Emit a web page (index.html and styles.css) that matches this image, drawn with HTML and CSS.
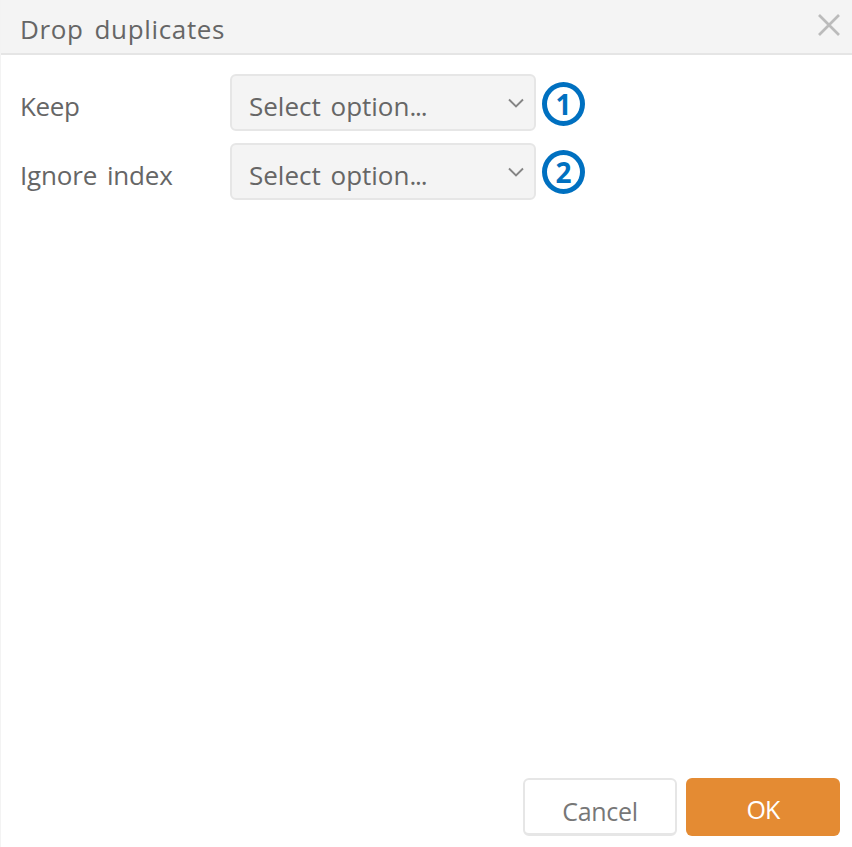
FILE: index.html
```html
<!DOCTYPE html>
<html lang="en">
<head>
<meta charset="utf-8">
<title>Drop duplicates</title>
<link rel="stylesheet" href="styles.css">
</head>
<body>
<div class="dialog">
  <header class="header">
    <h1 class="title">Drop duplicates</h1>
    <button class="close" aria-label="Close"><svg width="22" height="22" viewBox="0 0 22 22"><path d="M1 1L21 21M21 1L1 21"/></svg></button>
  </header>
  <main class="body">
    <div class="row">
      <span class="label label-keep">Keep</span>
      <button class="select"><span class="value">Select option<span class="dots">...</span></span><svg class="chevron" width="16" height="10" viewBox="0 0 16 10"><path d="M1 1.5L8 8.5L15 1.5"/></svg></button>
      <span class="badge">1</span>
    </div>
    <div class="row">
      <span class="label">Ignore index</span>
      <button class="select"><span class="value">Select option<span class="dots">...</span></span><svg class="chevron" width="16" height="10" viewBox="0 0 16 10"><path d="M1 1.5L8 8.5L15 1.5"/></svg></button>
      <span class="badge badge-second">2</span>
    </div>
  </main>
  <footer class="footer">
    <button class="btn cancel">Cancel</button>
    <button class="btn ok">OK</button>
  </footer>
</div>
</body>
</html>
```
FILE: styles.css
```css
* { box-sizing: border-box; }
body { margin: 0; background: #fff; }
button { font: inherit; color: inherit; margin: 0; padding: 0; border: 0; background: none; }
svg { fill: none; display: block; }
.dialog {
  width: 852px; height: 847px; display: flex; flex-direction: column;
  border-left: 1px solid #f3f3f3; background: #fff;
  font: 26px/36px "Open Sans", sans-serif; color: #666;
}
.header {
  height: 55px; display: flex; justify-content: space-between;
  padding: 11px 12px 0 19px; background: #f4f4f4; border-bottom: 2px solid #e5e5e5;
}
.title { margin: 0; font: inherit; letter-spacing: .65px; word-spacing: 3.5px; }
.close { height: 22px; margin-top: 3px; }
.close path { stroke: #bbb; stroke-width: 2.7; }
.body { flex: 1; padding: 19px 0 0 19px; display: flex; flex-direction: column; gap: 11px; }
.row { display: flex; align-items: flex-start; height: 58px; }
.label { width: 210px; padding-top: 14px; white-space: nowrap; word-spacing: 3px; letter-spacing: -.15px; }
.label-keep { letter-spacing: -.4px; }
.select {
  width: 306px; height: 57px; padding: 6px 10px 0 17px; display: flex;
  justify-content: space-between; align-items: center;
  background: #f4f4f4; border: 2px solid #e6e6e6; border-radius: 6px; word-spacing: 3px;
}
.dots { letter-spacing: -1.2px; }
.chevron { margin-top: -5px; }
.chevron path { stroke: #858585; stroke-width: 1.9; }
.badge {
  width: 43px; height: 44px; margin: 8px 0 0 6px; border: 5px solid #0070c0; border-radius: 50%;
  display: flex; align-items: center; justify-content: center;
  color: #0070c0; font-weight: 700; font-size: 28px;
}
.badge-second { margin-top: 7px; }
.footer { display: flex; justify-content: flex-end; gap: 9px; padding: 0 12px 11px 0; }
.btn { width: 154px; height: 58px; border-radius: 6px; font-size: 25px; letter-spacing: -.3px; }
.cancel { padding-top: 8px; border: 2px solid #e6e6e6; border-bottom-width: 3px; background: #fff; color: #777; }
.ok { padding-top: 4px; background: #e48b33; color: #fff; letter-spacing: -1px; }
```
